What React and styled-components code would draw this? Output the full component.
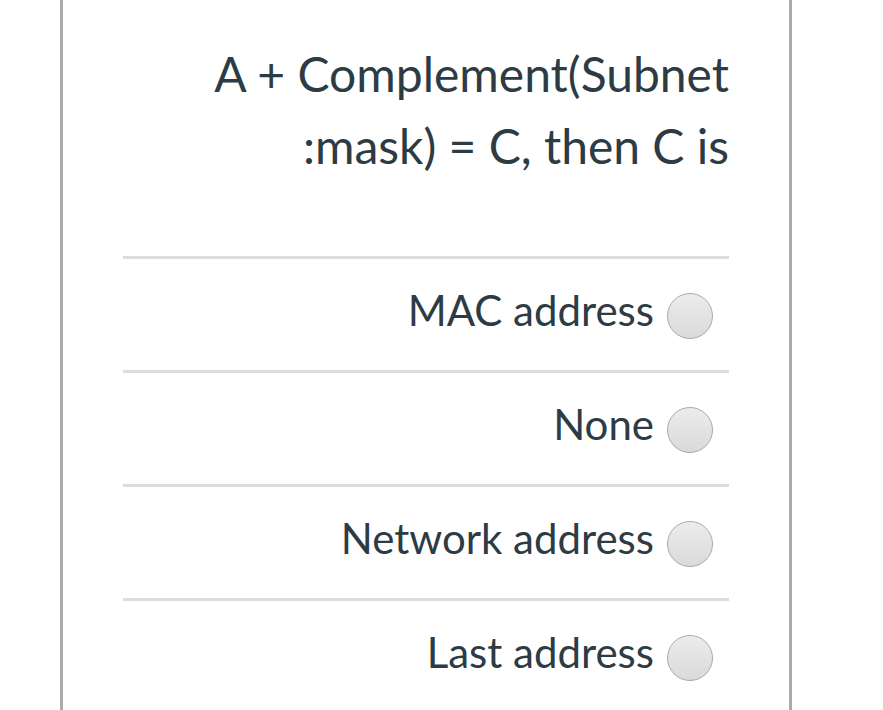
import React from "react";
import styled, { createGlobalStyle } from "styled-components";

const Global = createGlobalStyle`
  html, body {
    margin: 0;
    padding: 0;
    background: #ffffff;
    overflow: hidden;
  }
  body {
    font-family: Lato, "Open Sans", "Liberation Sans", sans-serif;
    color: #2d3b45;
  }
`;

const Page = styled.div`
  padding-left: 60px;
  height: 710px;
  overflow: hidden;
`;

const Panel = styled.div`
  box-sizing: border-box;
  width: 732px;
  min-height: 760px;
  border-left: 3px solid #aaaaaa;
  border-right: 3px solid #aaaaaa;
  padding: 38px 60px 0 60px;
`;

const Question = styled.p`
  margin: 0 0 74px 0;
  text-align: right;
  font-size: 48px;
  line-height: 72px;
  font-weight: 400;
  color: #2d3b45;
`;

const Options = styled.div`
  display: flex;
  flex-direction: column;
`;

const Option = styled.label`
  display: flex;
  align-items: center;
  justify-content: flex-end;
  gap: 13px;
  height: 111px;
  padding-right: 16px;
  border-top: 3px solid #dddddd;
  cursor: pointer;
`;

const OptionText = styled.span`
  font-size: 42px;
  line-height: 50px;
  color: #2d3b45;
  margin-bottom: 9px;
`;

const Radio = styled.span`
  box-sizing: border-box;
  flex: none;
  width: 46px;
  height: 46px;
  border-radius: 50%;
  border: 1px solid #a9a9a9;
  background: linear-gradient(#ececec, #dadada);
  margin-top: 3px;
`;

const answers = ["MAC address", "None", "Network address", "Last address"];

export default function App() {
  return (
    <>
      <Global />
      <Page>
        <Panel>
          <Question>
            A + Complement(Subnet
            <br />
            :mask) = C, then C is
          </Question>
          <Options>
            {answers.map((a) => (
              <Option key={a}>
                <OptionText>{a}</OptionText>
                <Radio />
              </Option>
            ))}
          </Options>
        </Panel>
      </Page>
    </>
  );
}
